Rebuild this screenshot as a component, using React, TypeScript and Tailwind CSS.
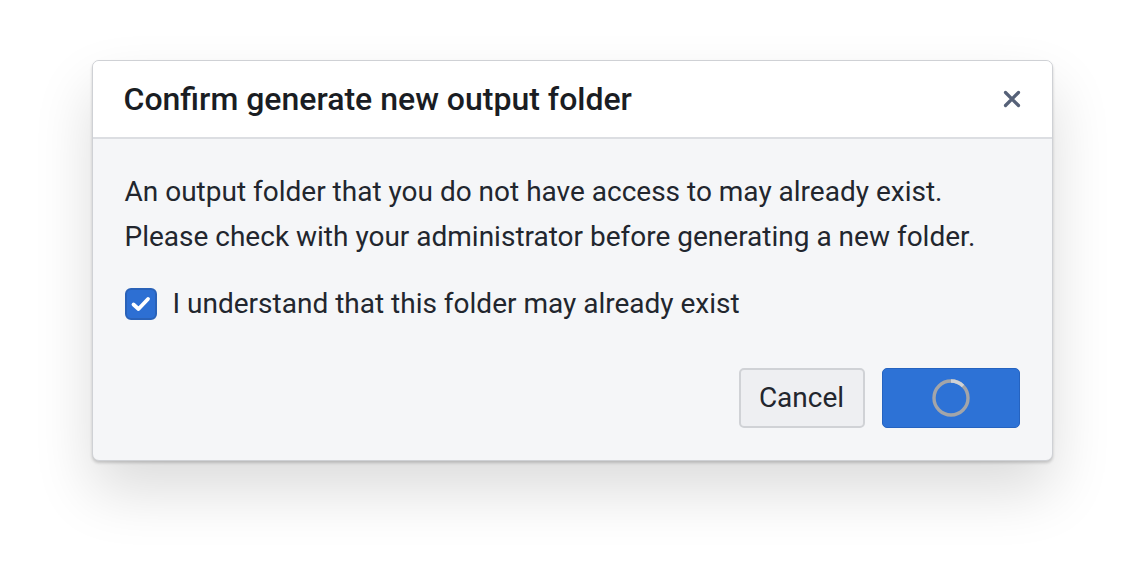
import React from "react";

export default function App() {
  return (
    <div className="w-[1144px] h-[584px] bg-white flex items-start justify-center pt-[60px]" style={{ fontFamily: "Roboto, 'Noto Sans', sans-serif" }}>
      <div className="w-[961px] h-[401px] rounded-[7px] bg-[#f5f6f8] border border-[#cfd1d5] shadow-[0_2px_3px_rgba(0,0,0,0.18),0_30px_60px_rgba(0,0,0,0.14)] flex flex-col overflow-hidden">
        <div className="h-[78px] bg-white border-b-2 border-[#dcdee2] flex items-center justify-between pl-[31px] pr-[30px] shrink-0">
          <h2 className="text-[32px] font-medium text-[#1a1d23]">Confirm generate new output folder</h2>
          <svg width="20" height="20" viewBox="0 0 20 20" className="text-[#566178]">
            <path d="M3.5 3.5 L16.5 16.5 M16.5 3.5 L3.5 16.5" stroke="currentColor" strokeWidth="3.2" strokeLinecap="round" />
          </svg>
        </div>
        <div className="flex-1 flex flex-col pl-[32px] pr-[32px] pt-[30px]">
          <p className="text-[28px] leading-[45px] text-[#22262e]">
            An output folder that you do not have access to may already exist.
            <br />
            Please check with your administrator before generating a new folder.
          </p>
          <label className="flex items-center gap-[16px] mt-[24px]">
            <span className="w-[32px] h-[32px] rounded-[6px] bg-[#2d6fd3] border-2 border-[#2a62b8] flex items-center justify-center">
              <svg width="24" height="24" viewBox="0 0 24 24">
                <path d="M4.5 12.5 L9.5 17 L19 7" stroke="white" strokeWidth="3.8" fill="none" strokeLinecap="round" strokeLinejoin="round" />
              </svg>
            </span>
            <span className="text-[28px] text-[#22262e]">I understand that this folder may already exist</span>
          </label>
          <div className="flex justify-end gap-[17px] mt-[43px]">
            <button className="w-[126px] h-[60px] rounded-[5px] bg-[#eeeff2] border-2 border-[#d0d2d6] text-[28px] text-[#22262e]">Cancel</button>
            <button className="w-[138px] h-[60px] rounded-[5px] bg-[#2d72d6] border border-[#2563c0] flex items-center justify-center">
              <svg width="40" height="40" viewBox="0 0 40 40">
                <circle cx="20" cy="20" r="17" stroke="#a3a5a9" strokeWidth="3.4" fill="none" />
                <path d="M20 3 A17 17 0 0 1 32 8" stroke="#cfd2d6" strokeWidth="3.4" fill="none" />
              </svg>
            </button>
          </div>
        </div>
      </div>
    </div>
  );
}
